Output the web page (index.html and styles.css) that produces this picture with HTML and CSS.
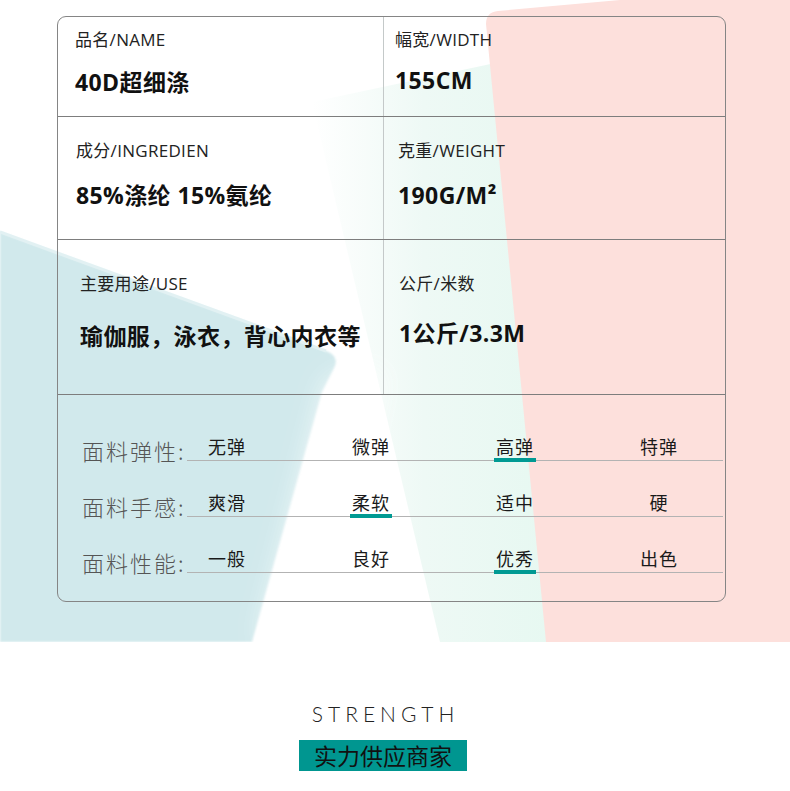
FILE: index.html
```
<!doctype html>
<html>
    <head>
        <title>面料参数</title>
        <meta charset="utf-8">
        <link rel="stylesheet" href="styles.css">
    </head>

    <body>
        <section class="hero">
            <svg class="bg" width="790" height="642" viewBox="0 0 790 642">
                <defs>
                    <linearGradient id="mint" x1="0" y1="0" x2="1" y2="0">
                        <stop offset="0" stop-color="#ffffff" />
                        <stop offset="0.45" stop-color="#eef9f5" />
                        <stop offset="1" stop-color="#e6f8f1" />
                    </linearGradient>
                    <filter id="soft" x="-20%" y="-20%" width="140%" height="140%">
                        <feGaussianBlur stdDeviation="14" />
                    </filter>
                    <filter id="edge">
                        <feGaussianBlur stdDeviation="1" />
                    </filter>
                </defs>
                <rect width="790" height="642" fill="#ffffff" />
                <path d="M312,102 L500,62 L560,642 L440,642 Z" fill="url(#mint)" />
                <path d="M0,232 L326,351 Q340,356 334,368 L322,392 L252,642 L0,642 Z" fill="#d1e9ec" filter="url(#edge)" />
                <path d="M0,232 L326,351" stroke="#e2f1f3" stroke-width="3" fill="none" />
                <path d="M330,380 L380,372 L320,642 L262,642 Z" fill="#ffffff" filter="url(#soft)" opacity="0.9" />
                <path d="M486,24 Q486,12 498,11 L620,0 L790,0 L790,642 L546,642 Z" fill="#fde0dc" />
            </svg>

            <div class="card">
                <div class="spec spec-1">
                    <div class="cell">
                        <p class="label">品名/NAME</p>
                        <p class="value">40D超细涤</p>
                    </div>
                    <div class="cell cell-r">
                        <p class="label">幅宽/WIDTH</p>
                        <p class="value">155CM</p>
                    </div>
                </div>

                <div class="spec spec-2">
                    <div class="cell">
                        <p class="label">成分/INGREDIEN</p>
                        <p class="value">85%涤纶 15%氨纶</p>
                    </div>
                    <div class="cell cell-r">
                        <p class="label">克重/WEIGHT</p>
                        <p class="value">190G/M²</p>
                    </div>
                </div>

                <div class="spec spec-3">
                    <div class="cell">
                        <p class="label">主要用途/USE</p>
                        <p class="value">瑜伽服，泳衣，背心内衣等</p>
                    </div>
                    <div class="cell cell-r">
                        <p class="label">公斤/米数</p>
                        <p class="value">1公斤/3.3M</p>
                    </div>
                </div>

                <div class="rates">
                    <div class="rate">
                        <span class="rate-name">面料弹性:</span>
                        <div class="opts">
                            <span>无弹</span>
                            <span>微弹</span>
                            <span class="on">高弹</span>
                            <span>特弹</span>
                        </div>
                    </div>

                    <div class="rate">
                        <span class="rate-name">面料手感:</span>
                        <div class="opts">
                            <span>爽滑</span>
                            <span class="on">柔软</span>
                            <span>适中</span>
                            <span>硬</span>
                        </div>
                    </div>

                    <div class="rate">
                        <span class="rate-name">面料性能:</span>
                        <div class="opts">
                            <span>一般</span>
                            <span>良好</span>
                            <span class="on">优秀</span>
                            <span>出色</span>
                        </div>
                    </div>
                </div>
            </div>
        </section>

        <section class="strength">
            <h2>STRENGTH</h2>
            <p class="tag">实力供应商家</p>
        </section>
    </body>
</html>
```

FILE: styles.css
```
 body{
     margin: 0px;
     padding: 0px;
     font-family: "Noto Sans CJK SC", "Noto Sans", sans-serif;
     color: #1a1a1a;
     background: #ffffff;
 }

 p, h2{
     margin: 0px;
 }

 .hero{
     position: relative;
     height: 642px;
     padding-top: 16px;
     box-sizing: border-box;
     overflow: hidden;
 }

 .bg{
     position: absolute;
     top: 0px;
     left: 0px;
     z-index: 0;
 }

 .card{
     position: relative;
     z-index: 1;
     margin-left: 57px;
     width: 669px;
     box-sizing: border-box;
     border: 1px solid #858585;
     border-radius: 9px;
 }

 .spec{
     display: grid;
     grid-template-columns: 325px 1fr;
     border-bottom: 1px solid #7d7d7d;
     box-sizing: border-box;
 }

 .spec-1{ height: 100px; }
 .spec-2{ height: 123px; }
 .spec-3{ height: 155px; }

 .cell{
     padding-left: 17px;
 }

 .cell-r{
     border-left: 1px solid #c4c9c9;
     padding-left: 11px;
 }

 .label{
     font-family: "Open Sans", "Noto Sans CJK SC", sans-serif;
     font-size: 17px;
     line-height: 24px;
     letter-spacing: 0.3px;
     color: #222;
 }

 .value{
     font-family: "Open Sans", "Noto Sans CJK SC", sans-serif;
     font-size: 23px;
     line-height: 30px;
     font-weight: 700;
     letter-spacing: 0.4px;
     color: #111;
 }

 .spec-1 .cell{ padding-top: 11px; }
 .spec-1 .value{ margin-top: 15px; }
 .spec-1 .cell-r .value{ margin-top: 13px; }

 .spec-2 .cell{ padding-top: 22px; padding-left: 18px; }
 .spec-2 .cell-r{ padding-left: 14px; }
 .spec-2 .value{ margin-top: 17px; }

 .spec-3 .cell{ padding-top: 32px; padding-left: 22px; }
 .spec-3 .cell-r{ padding-left: 15px; }
 .spec-3 .value{ margin-top: 25px; }
 .spec-3 .cell-r .value{ margin-top: 22px; }

 .rates{
     height: 206px;
     padding-top: 10px;
     box-sizing: border-box;
 }

 .rate{
     display: flex;
     align-items: flex-end;
     height: 56px;
     padding-left: 24px;
 }

 .rate-name{
     width: 105px;
     flex: none;
     font-size: 22px;
     line-height: 30px;
     font-weight: 300;
     letter-spacing: 2px;
     color: #555;
     margin-bottom: -4px;
     white-space: nowrap;
 }

 .opts{
     flex: 1;
     margin-right: 2px;
     display: grid;
     grid-template-columns: repeat(4, 42px);
     column-gap: 102px;
     align-items: end;
     padding-left: 19px;
     border-bottom: 1px solid #b3b3b3;
 }

 .opts span{
     font-size: 18px;
     line-height: 24px;
     letter-spacing: 1px;
     text-align: center;
     padding-bottom: 2px;
     white-space: nowrap;
 }

 .opts .on{
     padding-bottom: 0px;
     border-bottom: 4px solid #009a93;
     margin-bottom: -2px;
 }

 .strength{
     padding-top: 60px;
     padding-right: 24px;
     display: flex;
     flex-direction: column;
     align-items: center;
 }

 .strength h2{
     font-family: Lato, "Open Sans", sans-serif;
     font-weight: 300;
     font-size: 21px;
     line-height: 24px;
     letter-spacing: 5px;
     padding-left: 5px;
     color: #222;
 }

 .tag{
     margin-top: 14px;
     width: 168px;
     height: 31px;
     line-height: 31px;
     text-align: center;
     background: #009690;
     font-size: 23px;
     color: #111;
 }
```
